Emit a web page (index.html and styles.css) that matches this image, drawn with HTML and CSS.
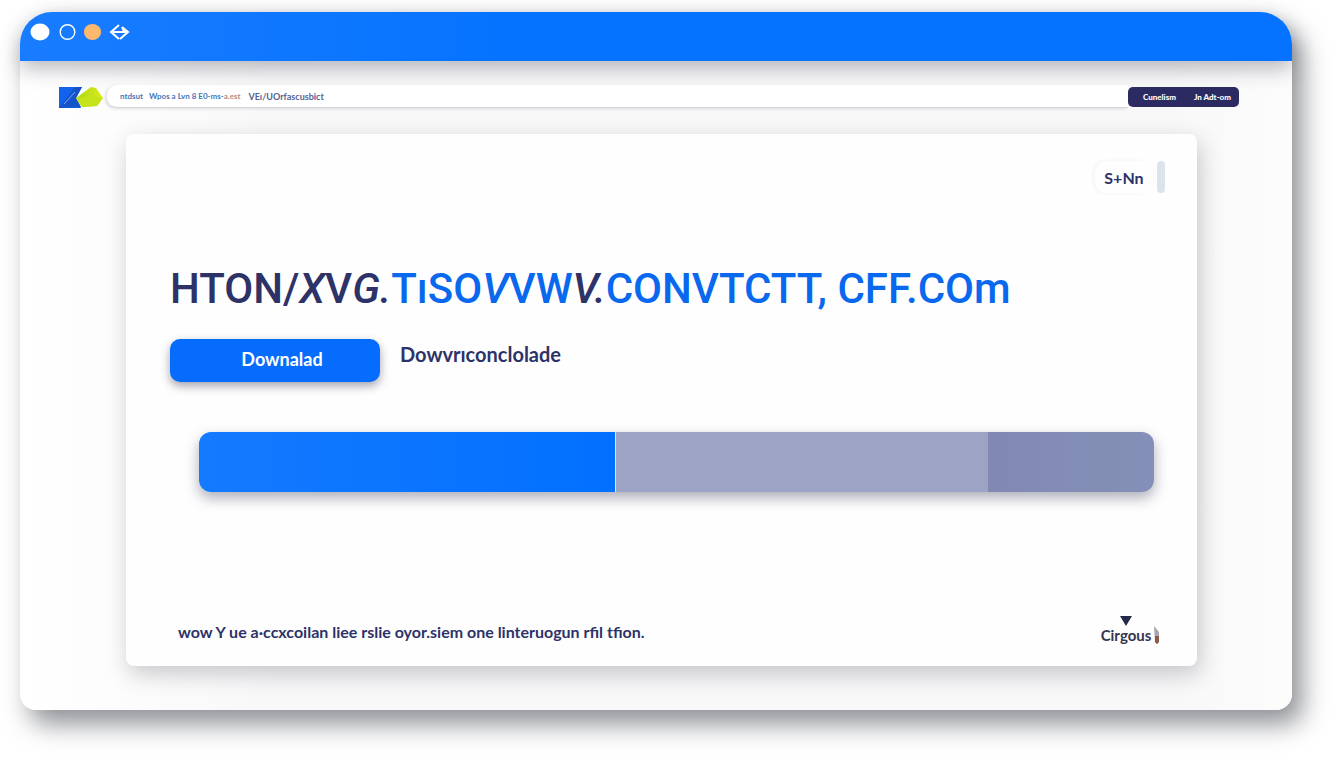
FILE: index.html
```html
<!DOCTYPE html>
<html lang="en">
<head>
<meta charset="UTF-8">
<meta name="viewport" content="width=device-width, initial-scale=1.0">
<title>Downalad</title>
<link rel="stylesheet" href="styles.css">
</head>
<body>

<div class="window">
    <div class="titlebar">
        <svg width="100" height="20" viewBox="0 0 100 20">
            <ellipse cx="10" cy="10" rx="9.5" ry="8.5" fill="#fff"/>
            <circle cx="37.5" cy="10" r="7.3" fill="none" stroke="#fff" stroke-width="1.4"/>
            <ellipse cx="62.5" cy="10" rx="8.6" ry="8" fill="#fbb96e"/>
            <path d="M89 3 L81 10 L89 17 M92 5 L98 10 L90 17 M83 10 H96" fill="none" stroke="#fff" stroke-width="2"/>
            <path d="M91 5 L99 10 L93 10 Z" fill="#fff"/>
        </svg>
    </div>

    <header class="header">
        <svg class="logo" width="45" height="22" viewBox="0 0 45 22">
            <defs>
                <linearGradient id="lime" x1="0" x2="1">
                    <stop offset="0" stop-color="#a9d914"/>
                    <stop offset="1" stop-color="#dcea1d"/>
                </linearGradient>
            </defs>
            <path d="M0 1 H23 L17 12 L22 22 H0 Z" fill="#1262ec"/>
            <path d="M0 22 L16 1 H23 L17 12 L22 21 Z" fill="#1453c8"/>
            <path d="M5 18 L16 6" stroke="#75a9ff" stroke-width="1"/>
            <path d="M17 12 L32 1 L37 2 L44 12 L38 20 L23 21 Z" fill="url(#lime)"/>
            <path d="M17 12 L34 10 L44 12 L38 20 L23 21 Z" fill="#c6e31a"/>
        </svg>
        <nav class="nav">
            <a href="#">ntdsut</a>
            <a href="#">Wpos a Lvn 8 E0-ms-<span class="warm">a.est</span></a>
            <a href="#" class="nav-last">VEı/UOrfascusbict</a>
        </nav>
        <div class="actions">
            <button type="button">Cunelism</button>
            <button type="button">Jn Adt-om</button>
        </div>
    </header>

    <main class="card">
        <div class="card-top">
            <button type="button" class="sign">S+Nn</button>
            <span class="handle"></span>
        </div>

        <h1 class="title">HTON/<i>X</i>V<i>G.</i><span class="blue">TıSO<i>V</i>VW</span><i>V.</i><span class="blue">CONVTCTT, CFF.COm</span></h1>

        <div class="download">
            <button type="button" class="btn">Downalad</button>
            <a href="#" class="download-link">Dowvrıconclolade</a>
        </div>

        <div class="progress">
            <div class="done" style="width: 43.7%"></div>
            <div class="queued" style="width: 38.9%"></div>
            <div class="rest" style="width: 17.4%"></div>
        </div>

        <footer class="card-footer">
            <p>wow Y ue a·ccxcoilan liee rslie oyor.siem one linteruogun rfil tfion.</p>
            <div class="brand">
                <svg width="12" height="10" viewBox="0 0 12 10"><path d="M0 0 H12 L6 10 Z" fill="#24284a"/></svg>
                <div class="brand-name">
                    <span>Cirgous</span>
                    <svg width="5" height="18" viewBox="0 0 5 18">
                        <path d="M0 0 L5 6 V16 L3 18 L1 16 Z" fill="#a7a6b0"/>
                        <path d="M1 10 H5 V16 L3 18 L1 16 Z" fill="#8a5a48"/>
                    </svg>
                </div>
            </div>
        </footer>
    </main>
</div>

</body>
</html>
```
FILE: styles.css
```css
* {
    box-sizing: border-box;
}

body {
    margin: 0;
    background: #fff;
    color: #2d3268;
    font-family: Lato, 'Open Sans', sans-serif;
}

button {
    border: none;
    padding: 0;
    background: none;
    color: inherit;
    font: inherit;
    cursor: pointer;
}

a {
    color: inherit;
    text-decoration: none;
}

.window {
    margin: 12px 52px 58px 20px;
    padding-bottom: 44px;
    border-radius: 32px 32px 16px 16px;
    background: linear-gradient(to right, #fff, #f8f8f9 20%, #f8f8f9 90%, #fcfcfc);
    box-shadow: 10px 14px 26px rgba(50, 52, 62, 0.55);
}

.titlebar {
    height: 49px;
    padding: 10px;
    border-radius: 32px 32px 0 0;
    background: linear-gradient(to right, #197cff, #0573ff 40%, #0573ff);
    box-shadow: 0 8px 20px rgba(60, 62, 80, 0.35);
}

.header {
    display: flex;
    align-items: center;
    margin: 23px 53px 0 39px;
    height: 25px;
}

.nav {
    display: flex;
    flex: 1;
    align-items: center;
    gap: 6px;
    height: 23px;
    margin-left: 3px;
    padding-left: 13px;
    border-bottom: 1px solid #d4d5da;
    border-radius: 10px 0 0 10px;
    background: #fff;
    color: #4678b8;
    font-size: 8px;
    font-weight: bold;
    box-shadow: -2px 1px 3px rgba(60, 62, 80, 0.15);
}

.nav .warm {
    color: #b48c84;
}

.nav .nav-last {
    margin-left: 2px;
    color: #56618f;
    font-size: 9px;
}

.actions {
    display: flex;
    justify-content: space-between;
    width: 111px;
    height: 20px;
    padding: 0 8px 0 15px;
    border-radius: 5px;
    background: #2b2b62;
    color: #fff;
    font-size: 8px;
    font-weight: 900;
}

.card {
    margin: 25px 95px 0 106px;
    padding: 27px 32px 20px 44px;
    border-radius: 8px;
    background: #fefefe;
    box-shadow: 3px 8px 22px rgba(50, 52, 62, 0.25);
}

.card-top {
    display: flex;
    justify-content: flex-end;
    gap: 4px;
}

.sign {
    width: 58px;
    height: 32px;
    border-radius: 12px;
    font-size: 16px;
    font-weight: bold;
    box-shadow: -2px 0 4px rgba(60, 62, 80, 0.05);
}

.handle {
    width: 8px;
    height: 32px;
    border-radius: 4px;
    background: #dce3eb;
}

.title {
    margin: 69px 0 23px;
    font-family: Roboto, sans-serif;
    font-size: 42px;
    font-weight: 500;
    line-height: 54px;
    white-space: nowrap;
}

.title .blue {
    color: #0868ee;
}

.download {
    display: flex;
    gap: 20px;
    font-size: 20px;
    font-weight: bold;
}

.btn {
    width: 210px;
    height: 43px;
    padding: 0 0 4px 14px;
    border-radius: 10px;
    background: #056cfd;
    color: #fff;
    font-size: 18px;
    box-shadow: 0 4px 10px rgba(50, 52, 80, 0.45);
}

.download-link {
    line-height: 30px;
}

.progress {
    display: flex;
    height: 60px;
    margin: 50px 11px 0 29px;
    border-radius: 12px;
    overflow: hidden;
    box-shadow: 0 6px 14px rgba(50, 52, 80, 0.4);
}

.done {
    border-right: 1px solid #dfe6f8;
    background: linear-gradient(to right, #147aff, #0270ff);
}

.queued {
    background: #9ca3c5;
}

.rest {
    background: linear-gradient(to right, #8189b2, #8490b7);
}

.card-footer {
    display: flex;
    justify-content: space-between;
    align-items: flex-end;
    margin-top: 124px;
    padding-left: 8px;
}

.card-footer p {
    margin: 0 0 4px;
    font-size: 16px;
    font-weight: bold;
    line-height: 20px;
}

.brand {
    display: flex;
    flex-direction: column;
    align-items: center;
    width: 70px;
    padding-bottom: 2px;
    color: #33364f;
    font-size: 15px;
    font-weight: bold;
    line-height: 16px;
}

.brand svg {
    display: block;
}

.brand > svg {
    margin-right: 8px;
}

.brand-name {
    display: flex;
    align-items: center;
    gap: 3px;
}
```
